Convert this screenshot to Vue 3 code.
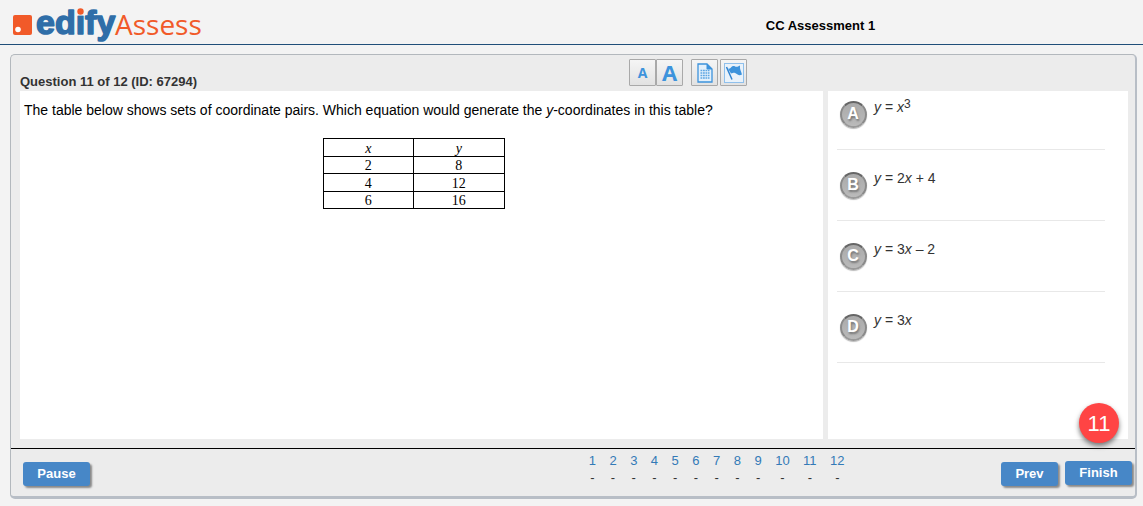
<script setup>
import { ref } from 'vue'

const rows = [[2, 8], [4, 12], [6, 16]]
const choices = [
  { letter: 'A', before: '', tail: '', sup: '3' },
  { letter: 'B', before: '2', tail: ' + 4' },
  { letter: 'C', before: '3', tail: ' – 2' },
  { letter: 'D', before: '3', tail: '' }
]
const answer = ref(null)
</script>

<template>
  <div class="page">
    <header class="header">
      <svg class="logo" width="200" height="44" viewBox="0 0 200 44" role="img" aria-label="edifyAssess">
        <rect x="1" y="15" width="19" height="20" rx="2" fill="#f15a29" />
        <circle cx="6" cy="29.5" r="2.8" fill="#fff" />
        <text class="logo-bold" x="24" y="34">edify</text>
        <rect x="64" y="7" width="9" height="8.500" fill="#f3f3f3" />
        <circle cx="68.500" cy="11.500" r="3.200" fill="#f15a29" />
        <text class="logo-light" x="103" y="35">Assess</text>
      </svg>
      <h1 class="title">CC Assessment 1</h1>
    </header>

    <main class="panel">
      <div class="topbar">
        <h2 class="question-no">Question 11 of 12 (ID: 67294)</h2>
        <div class="tools">
          <button class="tool small" type="button" aria-label="Smaller text">A</button>
          <button class="tool large" type="button" aria-label="Larger text">A</button>
          <button class="tool notes" type="button" aria-label="Notes">
            <svg width="16" height="20" viewBox="0 0 16 20">
              <path d="M1 1H10L15 6V19H1Z" fill="#e3f0fb" stroke="#3d93dc" stroke-width="1.300" />
              <path d="M10 1V6H15Z" fill="#3d93dc" stroke="#3d93dc" />
              <path d="M3.500 7.500H12.500M3.500 10H12.500M3.500 12.500H12.500M3.500 15H12.500" stroke="#5ea6e3" stroke-width="1.500" stroke-dasharray="1.800 .7" />
            </svg>
          </button>
          <button class="tool flag" type="button" aria-label="Flag question">
            <svg width="22" height="22" viewBox="0 0 22 22">
              <rect x="1.500" y="1.500" width="19" height="19" fill="#e9f2fa" stroke="#8fc0ec" />
              <path d="M3.500 5L9 17.500" stroke="#2f83d0" stroke-width="1.500" />
              <path d="M5 6.500C8 7.500 8 4 10.500 4C12.500 4 13 6 17 3.500C16.500 7 18 9 19 12.500C16 14 14.500 12.500 13 11.500C11 10 10 11.500 8 11.500Z" fill="#3d93dc" />
            </svg>
          </button>
        </div>
      </div>

      <div class="content">
        <section class="question">
          <p class="prompt">The table below shows sets of coordinate pairs. Which equation would generate the <i>y</i>-coordinates in this table?</p>
          <table class="pairs">
            <thead><tr><th scope="col">x</th><th scope="col">y</th></tr></thead>
            <tbody>
              <tr v-for="row in rows" :key="row[0]"><td v-for="n in row" :key="n">{{ n }}</td></tr>
            </tbody>
          </table>
        </section>

        <section class="answers" aria-label="Answers">
          <label v-for="c in choices" :key="c.letter" class="choice">
            <span class="badge">
              <input v-model="answer" class="radio" type="radio" name="answer" :value="c.letter">
              <span class="letter">{{ c.letter }}</span>
            </span>
            <span class="equation"><i>y</i> = {{ c.before }}<i>x</i><sup v-if="c.sup">{{ c.sup }}</sup>{{ c.tail }}</span>
          </label>
        </section>
      </div>

      <footer class="footer">
        <div class="side"><button class="btn" type="button">Pause</button></div>
        <ol class="pager">
          <li v-for="n in 12" :key="n"><a href="#">{{ n }}</a><span>-</span></li>
        </ol>
        <div class="side end">
          <button class="btn prev" type="button">Prev</button>
          <button class="btn finish" type="button">Finish</button>
        </div>
      </footer>
      <div class="bubble">11</div>
    </main>
  </div>
</template>

<style>
body {
  background: #f3f3f3;
}
</style>

<style scoped>
.page {
  box-sizing: border-box;
  min-height: 100vh;
  display: flex;
  flex-direction: column;
  padding-bottom: 7px;
  font-family: "Liberation Sans", Arial, sans-serif;
  font-size: 14px;
  color: #333;
}
.header {
  display: grid;
  grid-template-columns: 67% 1fr;
  height: 44px;
  border-bottom: 1px solid #1f4e79;
}
.logo {
  margin-left: 12px;
  overflow: visible;
}
.logo-bold {
  font: bold 34px "Liberation Sans", Arial, sans-serif;
  fill: #2f6ea8;
  stroke: #2f6ea8;
  stroke-width: 1.5;
  stroke-linejoin: round;
}
.logo-light {
  font: 28px "Open Sans", sans-serif;
  fill: #f15a29;
}
.title {
  margin: 18px 0 0;
  font-size: 13px;
  line-height: 16px;
  color: #000;
}
.panel {
  position: relative;
  flex: 1;
  display: flex;
  flex-direction: column;
  margin: 9px 6px 0 10px;
  background: #ececec;
  border: 1px solid #b3b8bd;
  border-width: 1px 2px 3px 1px;
  border-color: #b3b8bd #b8bec6 #b8bec6 #b3b8bd;
  border-radius: 5px;
}
.topbar {
  display: grid;
  grid-template-columns: 55% 1fr;
  height: 36px;
}
.question-no {
  margin: 19px 0 0 9px;
  font-size: 13px;
  line-height: 16px;
}
.tools {
  display: flex;
  padding-top: 4px;
}
.tool {
  box-sizing: border-box;
  width: 27px;
  height: 27px;
  padding: 0;
  display: flex;
  align-items: center;
  justify-content: center;
  border: 1px solid #a9a9a9;
  border-radius: 1px;
  background: linear-gradient(#f5f5f5, #e2e2e2);
  color: #3d93dc;
  font-family: "Open Sans", sans-serif;
  font-weight: bold;
}
.small {
  font-size: 14px;
}
.large {
  font-size: 22px;
  line-height: 22px;
  padding-bottom: 2px;
}
.notes {
  margin-left: 8px;
}
.flag {
  margin-left: 2px;
}
.content {
  flex: 1;
  display: grid;
  grid-template-columns: 1fr 300px;
  gap: 5px;
  padding: 0 7px 9px 9px;
}
.question {
  background: #fff;
  padding: 9px 20px 10px 4px;
}
.prompt {
  margin: 0;
  line-height: 20px;
  color: #000;
}
.pairs {
  width: 182px;
  margin: 18px auto 0;
  border-collapse: collapse;
  table-layout: fixed;
  color: #000;
  font: 14px/15px "Liberation Serif", serif;
}
.pairs th,
.pairs td {
  height: 16px;
  padding: 1px 0 0;
  box-sizing: border-box;
  border: 1px solid #000;
  text-align: center;
}
.pairs th {
  padding-top: 2px;
  font-weight: normal;
  font-style: italic;
}
.pairs tr:nth-child(2) td {
  padding-top: 2px;
}
.answers {
  background: #fff;
  padding: 0 23px 0 9px;
}
.choice {
  box-sizing: border-box;
  display: flex;
  gap: 6px;
  height: 71px;
  padding: 6px 0 0 1px;
  border-bottom: 1px solid #e8e8e8;
}
.choice:first-child {
  height: 59px;
}
.badge {
  display: grid;
  width: 30px;
  height: 30px;
  margin-top: 2px;
  place-items: center;
}
.choice:not(:first-child) .badge {
  margin-top: 14px;
}
.choice:not(:first-child) .equation {
  margin-top: 12px;
}
.radio,
.letter {
  grid-area: 1 / 1;
}
.radio {
  appearance: none;
  box-sizing: border-box;
  width: 27px;
  height: 27px;
  margin: 0;
  border-radius: 50%;
  background: linear-gradient(#aaa, #bababa);
  border: 2px solid #8a8a8a;
  border-top-color: #666;
  border-bottom-color: #999;
  box-shadow: 0 1px 1px #bbb;
}
.letter {
  color: #fff;
  font-size: 16px;
  line-height: 18px;
  font-weight: bold;
  text-shadow: 1px 2px 2px #777;
}
.equation {
  line-height: 20px;
}
.equation sup {
  font-size: 12px;
  line-height: 0;
  vertical-align: 4px;
}
.footer {
  display: grid;
  grid-template-columns: 199fr 256px 100fr;
  height: 47px;
  border-top: 1px solid #000;
}
.side {
  padding: 13px 0 0 12px;
}
.btn {
  height: 24px;
  width: 67px;
  padding: 0 0 2px;
  border: 0;
  border-radius: 3px;
  background: #4787c7;
  color: #fff;
  font: bold 13px "Liberation Sans", Arial, sans-serif;
  box-shadow: 2px 2px 2px #888;
}
.end {
  display: flex;
  justify-content: flex-end;
  gap: 7px;
  padding: 12px 3px 0 0;
}
.prev {
  width: 57px;
  margin-top: 1px;
}
.pager {
  display: flex;
  justify-content: space-between;
  margin: 3px 0 0;
  padding: 0;
  list-style: none;
  font-size: 13px;
  line-height: 17px;
}
.pager li {
  display: flex;
  flex-direction: column;
  align-items: center;
}
.pager a {
  color: #337ab7;
  text-decoration: none;
}
.bubble {
  position: absolute;
  right: 16px;
  bottom: 53px;
  width: 40px;
  height: 40px;
  border-radius: 50%;
  background: #ff4444;
  color: #fff;
  font: 22px/42px "Liberation Sans", Arial, sans-serif;
  text-align: center;
  box-shadow: 0 3px 5px #777;
}
</style>
